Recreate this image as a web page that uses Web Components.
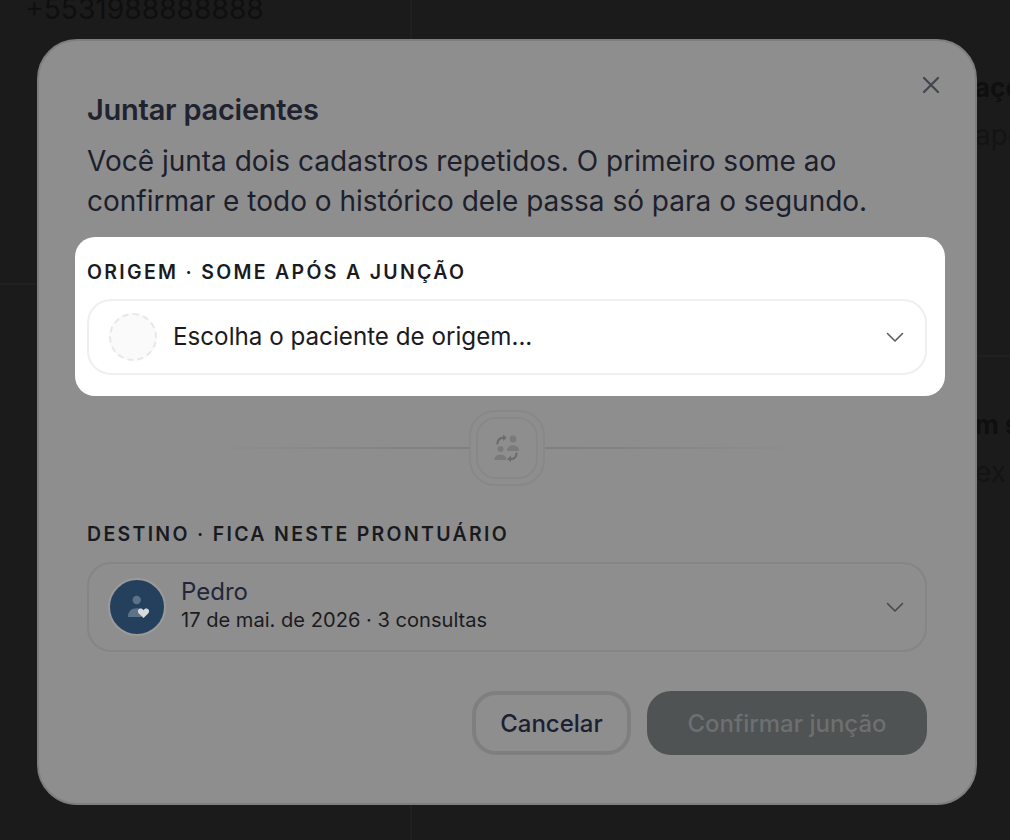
<!DOCTYPE html>
<html lang="pt-BR">
<head>
<meta charset="utf-8">
<title>Juntar pacientes</title>
<style>
  html, body { margin: 0; height: 100%; }
  body { background: #1b1b1b; overflow: hidden; font-family: Inter, "Liberation Sans", sans-serif; }
</style>
</head>
<body>
<page-behind></page-behind>
<merge-dialog>
  <span slot="title">Juntar pacientes</span>
  Você junta dois cadastros repetidos. O primeiro some ao confirmar e todo o histórico dele passa só para o segundo.
</merge-dialog>

<script>
// what stays dimmed behind the dialog
const behindTemplate = document.createElement('template');
behindTemplate.innerHTML = `
  <style>
    :host {
      display: grid;
      grid-template-columns: 412px 1fr;
      height: 100vh;
      overflow: hidden;
      color: #0f0f0f;
      font-family: Inter, "Liberation Sans", sans-serif;
    }
    #left { border-right: 2px solid #202020; padding: 0 0 0 25px; }
    #phone { font-size: 28.2px; line-height: 34px; margin-top: -8px; }
    #left-rule { border-top: 2px solid #202020; margin: 257px 0 0 -25px; }
    #right { padding-left: 563px; overflow: hidden; }
    .block { height: 355px; }
    .block + div + .block b { padding-top: 52px; }
    .block b { display: block; font-size: 26px; line-height: 32px; font-weight: 700; white-space: nowrap; padding-top: 72px; }
    .block span { display: block; font-size: 28px; line-height: 34px; color: #141414; white-space: nowrap; padding-top: 14px; }
    #right-rule { border-top: 2px solid #202020; margin: 0 0 0 -563px; height: 0; }
  </style>
  <div id="left">
    <div id="phone">+5531988888888</div>
    <div id="left-rule"></div>
  </div>
  <div id="right">
    <div class="block"><b>aço</b><span>apo</span></div>
    <div id="right-rule"></div>
    <div class="block"><b>m s</b><span>ex</span></div>
  </div>
`;
class PageBehind extends HTMLElement {
  constructor() {
    super();
    this.attachShadow({ mode: 'open' });
    this.shadowRoot.appendChild(behindTemplate.content.cloneNode(true));
  }
}

const dialogTemplate = document.createElement('template');
dialogTemplate.innerHTML = `
  <style>
    :host {
      position: fixed;
      left: 37px;
      top: 39px;
      width: 940px;
      height: 766px;
      box-sizing: border-box;
      padding: 50px 48px 48px;
      background: #8e8e8e;
      border: 2px solid #7e7e7e;
      border-radius: 40px;
      display: flex;
      flex-direction: column;
      color: #1d1f2c;
      font-family: Inter, "Liberation Sans", sans-serif;
    }
    #close {
      position: absolute;
      top: 32px;
      right: 32px;
      width: 24px;
      height: 24px;
      color: #43454f;
    }
    h1 {
      margin: 0;
      font-size: 29px;
      line-height: 38px;
      font-weight: 600;
      letter-spacing: -0.25px;
      color: #20232f;
    }
    p {
      margin: 12px 0 0;
      font-size: 28px;
      line-height: 40px;
      color: #1d1f2c;
    }
    #spot {
      background: #fff;
      border-radius: 20px;
      margin: 16px -18px 0 -12px;
      padding: 20px 18px 21px 12px;
      --border: #efefef;
      --ink: #1b1b1f;
      --chevron: #5c5c60;
      --gap: 12px;
    }
    #link {
      display: flex;
      flex: none;
      align-items: center;
      justify-content: center;
      height: 86px;
      margin-top: 9px;
    }
    #link i {
      display: block;
      height: 2px;
      width: 262px;
    }
    #link i:first-child { background: linear-gradient(to right, #8e8e8e, #7f7f7f); }
    #link i:last-child { background: linear-gradient(to left, #8e8e8e, #7f7f7f); }
    #ring {
      width: 76px;
      height: 76px;
      box-sizing: border-box;
      border: 2px solid #888;
      border-radius: 26px;
      padding: 5px;
      flex: none;
    }
    #ring div {
      height: 100%;
      box-sizing: border-box;
      border: 2px solid #888;
      border-radius: 20px;
      display: flex;
      align-items: center;
      justify-content: center;
    }
    #target { margin-top: 28px; --border: #858585; --ink: #1a1a1e; --chevron: #48484e; --gap: 13px; }
    #actions {
      display: flex;
      justify-content: flex-end;
      gap: 16px;
      margin-top: 39px;
    }
  </style>
  <svg id="close" viewBox="0 0 24 24" fill="none" stroke="currentColor" stroke-width="2.2" stroke-linecap="round">
    <path d="M5 5l14 14M19 5L5 19"/>
  </svg>
  <h1><slot name="title"></slot></h1>
  <p><slot></slot></p>
  <section id="spot">
    <patient-field label="ORIGEM · SOME APÓS A JUNÇÃO" placeholder="Escolha o paciente de origem..."></patient-field>
  </section>
  <div id="link">
    <i></i>
    <div id="ring"><div>
      <svg width="26" height="28" viewBox="0 0 26 28">
        <circle cx="19" cy="5" r="3.4" fill="#7a7a7a"/>
        <path d="M13 17c-.4-3.600 2.600-5.800 6-5.800s6.400 2.200 6 5.800z" fill="#7a7a7a"/>
        <circle cx="6.500" cy="15" r="3" fill="#7a7a7a"/>
        <path d="M.5 26c-.3-3.400 2.500-5.300 6-5.300s6.300 1.900 6 5.300z" fill="#7a7a7a"/>
        <path d="M3.500 9.500C3.800 5.500 6 3.600 9.500 3.800" fill="none" stroke="#6c6c6c" stroke-width="2.200" stroke-linecap="round"/>
        <path d="M9 .5l3.800 3.300L9 7z" fill="#6c6c6c"/>
        <path d="M22.500 19.500c-.2 3.800-2.500 5.700-6 5.500" fill="none" stroke="#6c6c6c" stroke-width="2.200" stroke-linecap="round"/>
        <path d="M17 21.500l-3.800 3.500 3.800 3z" fill="#6c6c6c"/>
      </svg>
    </div></div>
    <i></i>
  </div>
  <patient-field id="target" label="DESTINO · FICA NESTE PRONTUÁRIO" name="Pedro" detail="17 de mai. de 2026 · 3 consultas"></patient-field>
  <div id="actions">
    <action-button>Cancelar</action-button>
    <action-button primary>Confirmar junção</action-button>
  </div>
`;
class MergeDialog extends HTMLElement {
  constructor() {
    super();
    this.attachShadow({ mode: 'open' });
    this.shadowRoot.appendChild(dialogTemplate.content.cloneNode(true));
  }
}

const fieldTemplate = document.createElement('template');
fieldTemplate.innerHTML = `
  <style>
    :host { display: block; flex: none; font-family: Inter, "Liberation Sans", sans-serif; color: var(--ink); }
    #label {
      font-size: 19.5px;
      line-height: 30px;
      font-weight: 600;
      letter-spacing: 2.3px;
      white-space: nowrap;
      color: var(--ink);
    }
    #box {
      margin-top: var(--gap);
      box-sizing: border-box;
      border: 2px solid var(--border);
      border-radius: 24px;
      min-height: 76px;
      padding: 0 18px 0 20px;
      display: flex;
      align-items: center;
      gap: 14px;
    }
    #empty {
      width: 48px;
      height: 48px;
      box-sizing: border-box;
      border-radius: 50%;
      border: 2px dashed #e8e8e8;
      background: #fafafa;
      flex: none;
      margin-right: 2px;
    }
    #placeholder { font-size: 24.2px; font-weight: 400; flex: 1; padding-bottom: 2px; }
    #avatar {
      width: 58px;
      height: 58px;
      box-sizing: border-box;
      border-radius: 50%;
      border: 2px solid #9a9a9a;
      background: #24405c;
      flex: none;
      margin: 0 1px 0 -1px;
      display: flex;
      align-items: center;
      justify-content: center;
    }
    #who { flex: 1; padding: 13px 0 17px; }
    #name { font-size: 24px; line-height: 30px; color: #23263a; }
    #detail { font-size: 20.1px; line-height: 26px; color: #1b1b1f; }
    #chevron { width: 24px; height: 24px; color: var(--chevron); flex: none; }
  </style>
  <div id="label"></div>
  <div id="box"></div>
`;
class PatientField extends HTMLElement {
  constructor() {
    super();
    this.attachShadow({ mode: 'open' });
    this.shadowRoot.appendChild(fieldTemplate.content.cloneNode(true));
  }
  connectedCallback() {
    const root = this.shadowRoot;
    root.querySelector('#label').textContent = this.getAttribute('label');
    const chevron = `<svg id="chevron" viewBox="0 0 24 24" fill="none" stroke="currentColor" stroke-width="1.600" stroke-linecap="round" stroke-linejoin="round"><path d="M4.500 8.500l7.500 7.500 7.500-7.500"/></svg>`;
    if (this.hasAttribute('name')) {
      root.querySelector('#box').innerHTML = `
        <div id="avatar">
          <svg width="28" height="28" viewBox="0 0 28 28">
            <circle cx="13.700" cy="7" r="4.200" fill="#5b7287"/>
            <path d="M5 24c-.4-5.400 3.600-8.800 8.500-8.800 2 0 3.800.5 5 1.300V24z" fill="#5b7287"/>
            <path d="M20.500 25l-4.700-4.600c-1.400-1.400-1.100-3.600.4-4.400 1.600-.8 3.300-.3 4.300 1.200 1-1.500 2.700-2 4.300-1.200 1.500.8 1.800 3 .4 4.400z" fill="#d8dbde"/>
          </svg>
        </div>
        <div id="who">
          <div id="name">${this.getAttribute('name')}</div>
          <div id="detail">${this.getAttribute('detail')}</div>
        </div>${chevron}`;
    } else {
      root.querySelector('#box').innerHTML = `
        <div id="empty"></div>
        <div id="placeholder">${this.getAttribute('placeholder')}</div>${chevron}`;
    }
  }
}

const buttonTemplate = document.createElement('template');
buttonTemplate.innerHTML = `
  <style>
    :host {
      display: flex;
      align-items: center;
      justify-content: center;
      box-sizing: border-box;
      height: 64px;
      width: 159px;
      border: 4px solid #7f7f7f;
      border-radius: 24px;
      font-family: Inter, "Liberation Sans", sans-serif;
      font-size: 24px;
      font-weight: 500;
      color: #1d1f33;
    }
    :host([primary]) {
      width: 280px;
      border: 0;
      background: #4f5353;
      color: #6c7070;
    }
  </style>
  <slot></slot>
`;
class ActionButton extends HTMLElement {
  constructor() {
    super();
    this.attachShadow({ mode: 'open' });
    this.shadowRoot.appendChild(buttonTemplate.content.cloneNode(true));
  }
}

customElements.define('page-behind', PageBehind);
customElements.define('patient-field', PatientField);
customElements.define('action-button', ActionButton);
customElements.define('merge-dialog', MergeDialog);
</script>
</body>
</html>
